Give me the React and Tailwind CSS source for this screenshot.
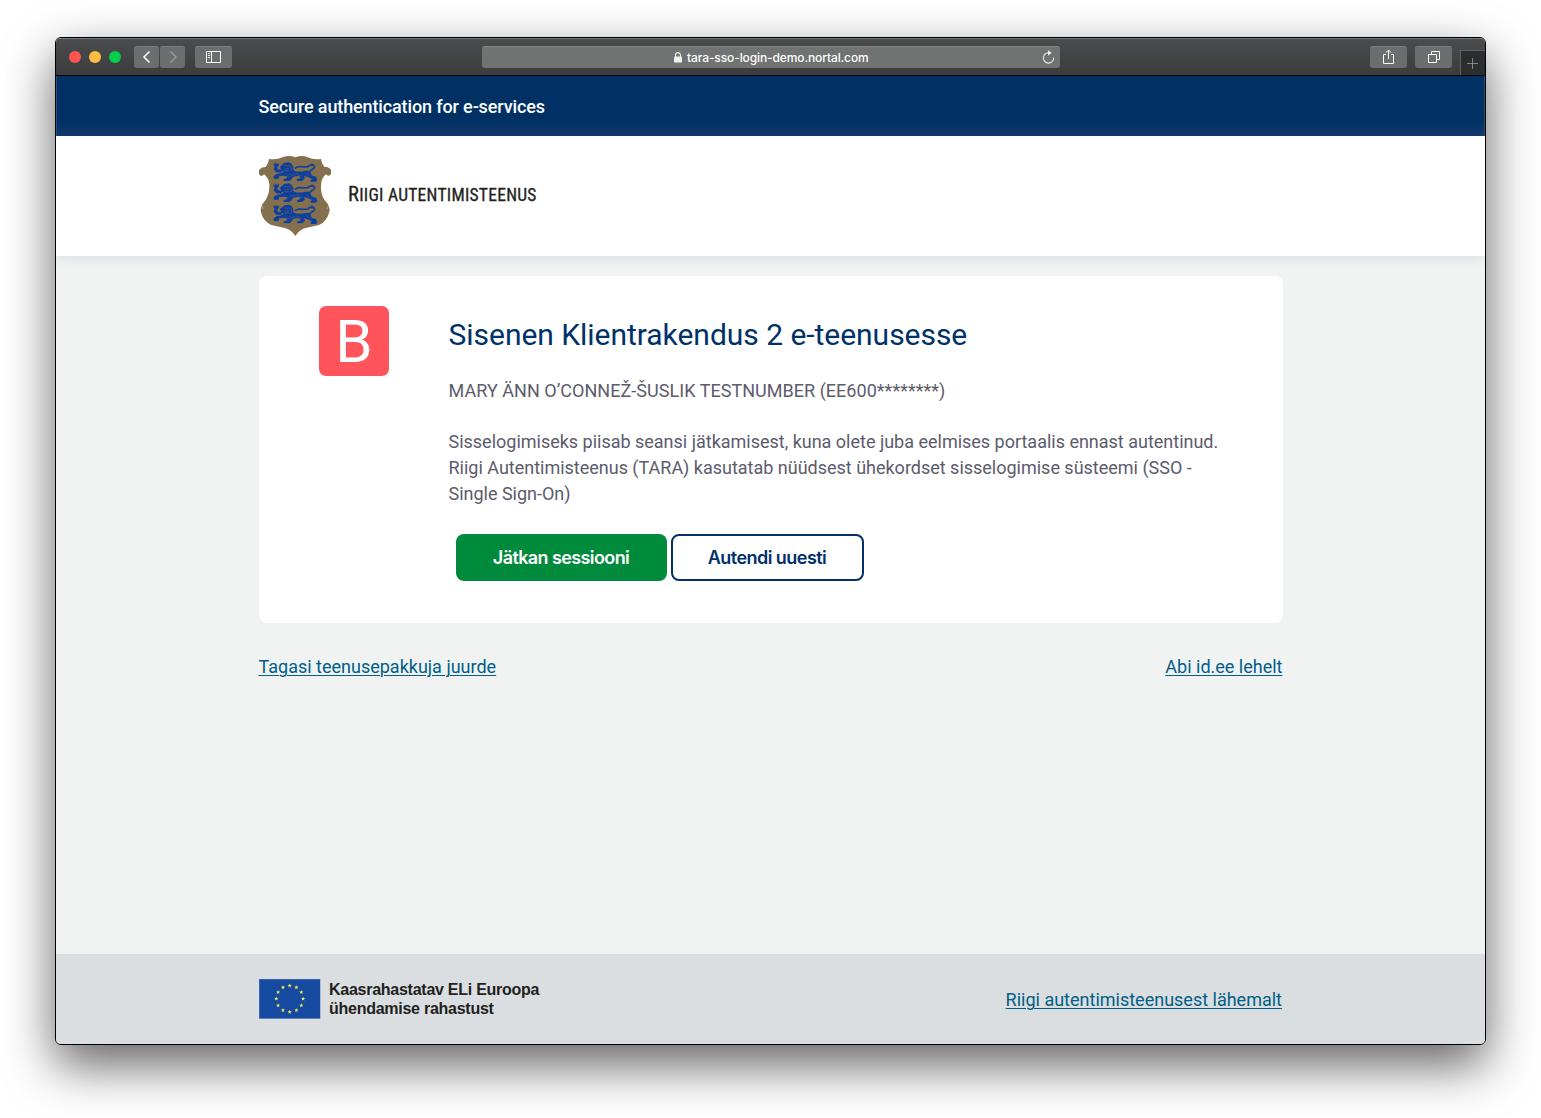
import React from "react";

const STARS = Array.from({ length: 12 }, (_, i) => {
  const a = (i * Math.PI) / 6;
  return [30.7 + 13.4 * Math.sin(a), 19.8 - 13.2 * Math.cos(a)];
});

function starPoints(cx, cy, r) {
  return Array.from({ length: 10 }, (_, i) => {
    const a = (i * Math.PI) / 5;
    const q = i % 2 ? r * 0.42 : r;
    return `${(cx + q * Math.sin(a)).toFixed(2)},${(cy - q * Math.cos(a)).toFixed(2)}`;
  }).join(" ");
}

function EuFlag() {
  return (
    <svg width="62" height="40" viewBox="0 0 62 40" className="shrink-0">
      <rect width="61.500" height="40" fill="#7f9bcc" />
      <rect width="60.700" height="39" x="0.3" y="0.3" fill="#164aa0" />
      {STARS.map(([x, y], i) => (
        <polygon key={i} points={starPoints(x, y, 2.2)} fill="#f3ec4a" />
      ))}
    </svg>
  );
}

function Lion({ y }) {
  return (
    <g transform={`translate(0 ${y})`}>
      <g fill="#0d3f9f">
        <path d="M72 51 l4 5 l1 -7 l5 5 l5 -3 l-1 8 l-5 6 l4 5 l11 2 l-2 8 l-15 -1 l-8 -9 l3 -8 l-4 -5z" />
        <path d="M98 55 q4 -6 12 -5 q10 -3 15 4 q7 7 5 17 l3 3 q16 5 32 0 q14 -3 17 6 l3 8 l14 5 l3 10 l-5 4 h-14 l-2 -5 l6 -2 l-11 -6 l-14 -4 l3 7 l-9 8 h-14 l-2 -5 l12 -4 l-5 -7 l-18 3 l-5 9 l-7 4 h-15 l-2 -5 l9 -3 l4 -5 l-9 -3 l-16 1 l-3 8 l-11 1 l-4 -5 l3 -6 l7 -4 l14 -3 l7 -4 l-8 -6 l-3 -9z" />
      </g>
      <path d="M174 83 q6 -10 15 -14 q10 -9 -1 -12 q-9 -2 -14 5 l-17 1 q-13 -3 -22 4" fill="none" stroke="#0d3f9f" strokeWidth="5" />
      <path d="M185 50 l7 7 l-9 4z" fill="#0d3f9f" />
      <path d="M102 60 l6 -2 l3 3 l4 -3 l6 3 M105 67 l5 2 l7 -2 M103 73 q7 4 14 0 M123 60 q4 8 0 16 M119 84 l8 5 l9 -5 M139 82 l10 4 M169 81 q5 3 6 10 M112 88 l7 5 M151 88 l6 4" fill="none" stroke="#6e6350" strokeWidth="1.8" />
    </g>
  );
}

function Crest() {
  return (
    <svg width="72" height="80" viewBox="27 30 216 240" className="shrink-0">
      <path
        d="M57 39 Q80 42 98 34 Q117 26 136 34 Q154 26 173 34 Q190 42 213 39 Q214 51 223 62 Q235 62 241 69 Q248 79 240 88 Q233 91 228 85 Q211 97 213 128 Q214 155 232 172 Q241 184 238 197 Q231 226 207 237 L164 247 Q146 254 136 270 Q126 254 107 247 L64 237 Q40 227 33 199 Q30 184 39 172 Q57 153 58 126 Q60 97 42 85 Q38 91 31 89 Q23 80 29 70 Q35 63 47 63 Q56 52 57 39Z"
        fill="#84704f"
      />
      <path d="M35 178 L40 189 M236 178 L231 189" fill="none" stroke="#e9e4da" strokeWidth="1.5" />
      <Lion y={0} />
      <Lion y={63} />
      <Lion y={127} />
    </svg>
  );
}

function ToolButton({ className, children }) {
  return (
    <div className={`flex h-[22px] items-center justify-center rounded-[3px] border-t border-[#7b7c7d] bg-[#6c6d6e] pb-px ${className}`}>
      {children}
    </div>
  );
}

function Toolbar() {
  return (
    <div className="flex h-[38px] shrink-0 items-center justify-between border-t border-b border-t-[#777879] border-b-black bg-linear-to-b from-[#4a4c4d] to-[#3b3c3d] pl-[13px]">
      <div className="flex w-[413px] shrink-0 items-center">
        <div className="flex gap-2">
          <span className="size-3 rounded-full bg-[#ff5450]" />
          <span className="size-3 rounded-full bg-[#ffbd41]" />
          <span className="size-3 rounded-full bg-[#00cf4b]" />
        </div>
        <div className="ml-[13px] flex gap-px">
          <ToolButton className="w-[25px]">
            <svg width="10" height="14" viewBox="0 0 10 14" fill="none" stroke="#fff" strokeWidth="1.5"><path d="M7.5 1.5 2 7l5.500 5.500" /></svg>
          </ToolButton>
          <ToolButton className="w-[25px]">
            <svg width="10" height="14" viewBox="0 0 10 14" fill="none" stroke="#96989a" strokeWidth="1.400"><path d="M2.500 1.500 8 7l-5.500 5.500" /></svg>
          </ToolButton>
        </div>
        <ToolButton className="ml-[10px] w-[37px]">
          <svg width="15" height="12" viewBox="0 0 15 12" fill="none" stroke="#fff"><path d="M.5.5h14v11H.5zM5.500.5v11" /><path d="M2 2.500h2M2 4.500h2M2 6.500h2" strokeWidth=".9" /></svg>
        </ToolButton>
      </div>
      <div className="flex h-[22px] w-[578px] shrink-0 items-center rounded-[3px] border-t border-[#858686] bg-[#717272] pr-[5px] pl-[192px]">
        <svg width="8" height="11" viewBox="0 0 8 11" className="mb-px"><rect y="4.600" width="8" height="6" rx=".8" fill="#f1f1f1" /><path d="M1.600 5V3a2.400 2.400 0 0 1 4.800 0v2" fill="none" stroke="#f1f1f1" strokeWidth="1.100" /></svg>
        <span className="ml-[5px] whitespace-nowrap font-[Inter] text-[12px] font-medium tracking-[-0.11px] text-white">tara-sso-login-demo.nortal.com</span>
        <svg className="mb-0.5 ml-auto" width="13" height="14" viewBox="0 0 13 14"><path d="M8.500 3.100A5.200 5.200 0 1 0 11.700 7.600" fill="none" stroke="#e8e8e8" strokeWidth="1.100" /><path d="M6 .2v5.400L9.800 3z" fill="#f1f1f1" /></svg>
      </div>
      <div className="flex w-[425px] shrink-0 items-center justify-end">
        <ToolButton className="w-[37px]">
          <svg width="13" height="16" viewBox="0 0 13 16" fill="none" stroke="#fff"><path d="M4 5.500H1.500v9h10v-9H9M6.500 10V1M4 3.500 6.500 1 9 3.500" /></svg>
        </ToolButton>
        <ToolButton className="ml-2 w-[37px] pl-px">
          <svg width="12" height="12" viewBox="0 0 12 12" fill="none" stroke="#fff"><path d="M.5 3.500h8v8h-8zM3.500 3V.5h8v8H9" /></svg>
        </ToolButton>
        <div className="mt-[11px] ml-2 flex h-[25px] w-[25px] items-center justify-center self-end border-t border-l border-[#606162] bg-[#2c2d2e] pr-0.5">
          <svg width="11" height="11" viewBox="0 0 11 11" stroke="#858687"><path d="M5.500 0v11M0 5.500h11" /></svg>
        </div>
      </div>
    </div>
  );
}

function TextLink({ className = "", children }) {
  return (
    <a href="#" className={`whitespace-nowrap text-lg text-[#005e87] underline decoration-1 underline-offset-2 ${className}`}>
      {children}
    </a>
  );
}

export default function App() {
  return (
    <div className="h-[1118px] w-[1541px] overflow-hidden bg-white pt-[37px] pl-[55px] font-[Roboto,sans-serif]">
      <div className="flex h-[1008px] w-[1431px] flex-col overflow-hidden rounded-[6px] border border-black bg-[#f1f3f3] shadow-[0_20px_50px_rgba(0,0,0,0.62)]">
        <Toolbar />
        <div className="flex h-[60px] shrink-0 items-center border-x border-[#2a517e] bg-linear-to-b from-[#003064] from-75% to-[#123a6c] pl-[201.500px]">
          <span className="mt-0.5 whitespace-nowrap text-lg font-medium tracking-[-0.13px] text-white">Secure authentication for e-services</span>
        </div>
        <header className="relative flex h-[120px] shrink-0 items-center bg-white pl-[203px] shadow-[0_2px_12px_rgba(0,30,60,0.10)]">
          <Crest />
          <h2 className="mb-[4px] ml-[17px] whitespace-nowrap font-['Roboto_Condensed',Roboto] text-[17.500px] tracking-[0.26px] text-[#231f20] [-webkit-text-stroke:0.3px_#231f20]">
            <span className="text-[20.500px]">R</span>IIGI AUTENTIMISTEENUS
          </h2>
        </header>
        <main className="mx-auto flex w-[1024px] grow flex-col pt-5">
          <section className="flex h-[347px] rounded-[8px] bg-white pt-[30px] pl-[60px]">
            <div className="flex size-[70px] shrink-0 items-center justify-center rounded-[7px] bg-[#ff545c] pt-0.5 pl-px">
              <span className="text-[60px] leading-[70px] text-white">B</span>
            </div>
            <div className="ml-[60px] w-[790px]">
              <h1 className="mt-[8px] whitespace-nowrap text-[30px] leading-[41px] tracking-[-0.03px] text-[#003168]">Sisenen Klientrakendus 2 e-teenusesse</h1>
              <p className="mt-[23px] whitespace-nowrap text-lg leading-[26px] tracking-[0.035px] text-[#5c5b6c]">MARY ÄNN O’CONNEŽ-ŠUSLIK TESTNUMBER (EE600********)</p>
              <p className="mt-[25px] whitespace-nowrap text-lg leading-[26px] tracking-[-0.008px] text-[#5c5b6c]">
                Sisselogimiseks piisab seansi jätkamisest, kuna olete juba eelmises portaalis ennast autentinud.
                <br />
                Riigi Autentimisteenus (TARA) kasutatab nüüdsest ühekordset sisselogimise süsteemi (SSO -
                <br />
                Single Sign-On)
              </p>
              <div className="mt-[27px] ml-[7px] flex gap-1">
                <button className="h-[47px] w-[211px] whitespace-nowrap rounded-[8px] bg-[#008a3c] font-[Inter] text-lg font-semibold tracking-[-0.6px] text-white">Jätkan sessiooni</button>
                <button className="h-[47px] w-[193px] whitespace-nowrap rounded-[8px] border-2 border-[#003168] bg-white font-[Inter] text-lg font-semibold tracking-[-0.55px] text-[#003168]">Autendi uuesti</button>
              </div>
            </div>
          </section>
          <nav className="mt-[30px] flex justify-between">
            <TextLink>Tagasi teenusepakkuja juurde</TextLink>
            <TextLink>Abi id.ee lehelt</TextLink>
          </nav>
        </main>
        <footer className="flex h-[90px] shrink-0 items-center bg-[#dadee1] px-[203px]">
          <EuFlag />
          <p className="ml-2 whitespace-nowrap font-['Liberation_Sans',sans-serif] text-[16px] leading-[19px] font-bold tracking-[-0.26px] text-[#231f20]">
            Kaasrahastatav ELi Euroopa
            <br />
            ühendamise rahastust
          </p>
          <TextLink className="mt-0.5 ml-auto">Riigi autentimisteenusest lähemalt</TextLink>
        </footer>
      </div>
    </div>
  );
}
